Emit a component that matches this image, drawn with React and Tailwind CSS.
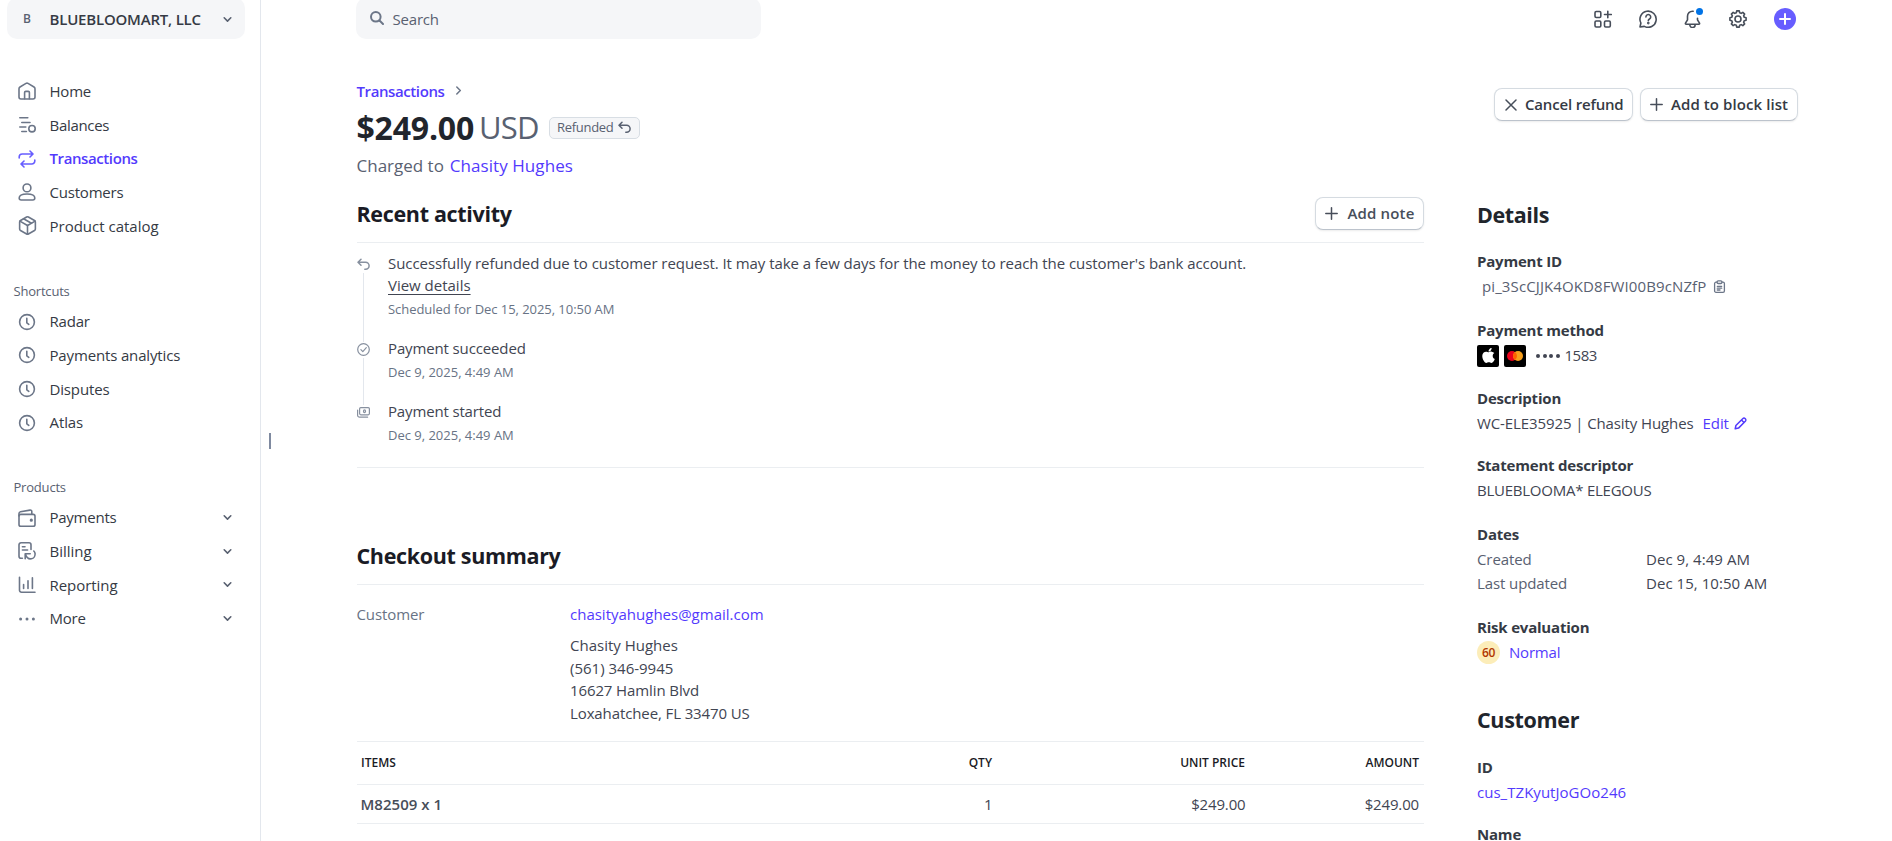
import React, { useState } from "react";
import { Package } from "lucide-react";
import { FaApple } from "react-icons/fa";

// 8 rounded teeth around the center of an 18x18 box
const gearPath = (() => {
    const pts = [];
    for (let i = 0; i < 8; i++) {
        [[-15, 6.5], [-9, 8.2], [9, 8.2], [15, 6.5]].forEach(([offset, r]) => {
            const a = ((i * 45 + offset) * Math.PI) / 180;
            pts.push(`${(9 + r * Math.sin(a)).toFixed(2)} ${(9 - r * Math.cos(a)).toFixed(2)}`);
        });
    }
    return `M${pts.join("L")}Z`;
})();

function Svg({ className = "size-[18px]", box = 18, width = 1.6, children }) {
    return (
        <svg
            className={`shrink-0 ${className}`}
            viewBox={`0 0 ${box} ${box}`}
            fill="none"
            stroke="currentColor"
            strokeWidth={width}
            strokeLinecap="round"
            strokeLinejoin="round"
        >
            {children}
        </svg>
    );
}

const HomeIcon = () => (
    <Svg>
        <path d="M1 6.7a2 2 0 0 1 1-1.7l6-3.6a2 2 0 0 1 2 0L16 5a2 2 0 0 1 1 1.7V15a2 2 0 0 1-2 2H3a2 2 0 0 1-2-2z" />
        <path d="M6.6 16.8v-6.2a1.2 1.2 0 0 1 1.2-1.2h2.4a1.2 1.2 0 0 1 1.2 1.2v6.2" />
    </Svg>
);

const BalancesIcon = () => (
    <Svg>
        <path d="M1.8 1.8h8M3.8 6.5h8.2M1.8 11h6M3.8 15.5h4.6" />
        <circle cx="14" cy="12.7" r="3.2" />
    </Svg>
);

const SwapIcon = () => (
    <Svg>
        <path d="M1.2 8V7a3 3 0 0 1 3-3h10.6M12 1l3 3-3 3" />
        <path d="M16.8 10v1a3 3 0 0 1-3 3H3.2M6 11l-3 3 3 3" />
    </Svg>
);

const PersonIcon = () => (
    <Svg>
        <circle cx="9" cy="4.9" r="3.9" />
        <path d="M1.2 15c0-2.4 3-4 7.8-4s7.8 1.6 7.8 4c0 1.2-.8 2-2 2H3.2c-1.2 0-2-.8-2-2z" />
    </Svg>
);

const BoxIcon = () => <Package className="size-[21px] -mx-[1.5px] shrink-0" strokeWidth={1.8} />;

const ClockIcon = () => (
    <Svg>
        <circle cx="9" cy="9" r="7.4" />
        <path d="M8.8 5.2v4.6l2 1.5" />
    </Svg>
);

const WalletIcon = () => (
    <Svg>
        <rect x="1" y="5.4" width="16" height="11.8" rx="1.8" />
        <path d="M1 7V4.6c0-.9.6-1.6 1.5-1.8L12 1.1c1-.2 1.8.4 1.8 1.4v2.8" />
        <circle cx="13.3" cy="11.2" r="0.8" fill="currentColor" />
    </Svg>
);

const BillingIcon = () => (
    <Svg>
        <path d="M4.4 16.2H3a2 2 0 0 1-2-2V2.8a2 2 0 0 1 2-2h8a2 2 0 0 1 2 2v4.6" />
        <path d="M4.4 4.8H7M4.4 8h5.2" />
        <path d="M7.2 16.8v-5h5M7.4 12c1.2 3.8 3.6 5.3 6 4.8 2.5-.5 4-3 3.6-5.6-.2-1-.7-1.7-1.2-2.2" />
    </Svg>
);

const ChartIcon = () => (
    <Svg>
        <path d="M1.5 1.2v13a2 2 0 0 0 2 2H17M5.6 8.5v4M10 4.8v7.7M14.4 1.8v10.7" />
    </Svg>
);

const DotsIcon = () => (
    <Svg>
        {[2.6, 9, 15.4].map((x) => (
            <circle key={x} cx={x} cy="9" r="1.5" fill="currentColor" stroke="none" />
        ))}
    </Svg>
);

const ChevronDown = () => (
    <Svg className="size-[9px] text-[#596171]" box={9} width={1.6}>
        <path d="M1.2 2.8l3.3 3.3 3.3-3.3" />
    </Svg>
);

const PlusIcon = () => (
    <Svg className="size-[13px] text-[#474e5a]" box={13} width={1.5}>
        <path d="M6.5.8v11.4M.8 6.5h11.4" />
    </Svg>
);

const CloseIcon = () => (
    <Svg className="size-[12px] text-[#474e5a]" box={12} width={1.5}>
        <path d="M1 1l10 10M11 1L1 11" />
    </Svg>
);

const ReturnIcon = () => (
    <Svg className="size-[13px]" box={13} width={1.5}>
        <path d="M4 1.2L1 4.2l3 3M1.2 4.2h7.4a3.5 3.5 0 0 1 0 7H7.8" />
    </Svg>
);

const CheckCircleIcon = () => (
    <Svg className="size-[13px]" box={13} width={1.2}>
        <circle cx="6.5" cy="6.5" r="5.8" />
        <path d="M3.9 6.7l1.9 1.9 3.5-3.9" />
    </Svg>
);

const CashIcon = () => (
    <Svg className="size-[13px]" box={13} width={1.2}>
        <rect x="2.6" y="1.6" width="9.8" height="7.2" rx="1.2" />
        <path d="M.6 4v5.2a2 2 0 0 0 2 2h8" />
        <ellipse cx="7.5" cy="5.2" rx="1" ry="1.4" />
    </Svg>
);

const mainNav = [
    { label: "Home", icon: HomeIcon, tracking: "tracking-[-0.2px]" },
    { label: "Balances", icon: BalancesIcon, tracking: "tracking-[-0.3px]" },
    { label: "Transactions", icon: SwapIcon, tracking: "tracking-[-0.4px]" },
    { label: "Customers", icon: PersonIcon, tracking: "tracking-[-0.2px]" },
    { label: "Product catalog", icon: BoxIcon, tracking: "tracking-[0px]" },
];

const shortcuts = [
    { label: "Radar", icon: ClockIcon, tracking: "tracking-[-0.2px]" },
    { label: "Payments analytics", icon: ClockIcon, tracking: "tracking-[-0.15px]" },
    { label: "Disputes", icon: ClockIcon, tracking: "tracking-[-0.15px]" },
    { label: "Atlas", icon: ClockIcon, tracking: "tracking-[-0.1px]" },
];

const products = [
    { label: "Payments", icon: WalletIcon, tracking: "tracking-[-0.25px]" },
    { label: "Billing", icon: BillingIcon, tracking: "tracking-[0px]" },
    { label: "Reporting", icon: ChartIcon, tracking: "tracking-[-0.05px]" },
    { label: "More", icon: DotsIcon, tracking: "tracking-[-0.2px]" },
];

function NavList({ items, active, setActive, expandable }) {
    return (
        <ul>
            {items.map(({ label, icon: Icon, tracking }) => {
                const isActive = active === label;
                return (
                    <li key={label}>
                        <button
                            onClick={() => setActive(label)}
                            className={`flex h-[33.7px] w-full items-center pl-[18px] pr-[28px] ${
                                isActive ? "font-semibold text-[#533afd]" : "text-[#353a44]"
                            }`}
                        >
                            <span className={`mr-[13.5px] flex ${isActive ? "text-[#675dff]" : "text-[#6c7688]"}`}>
                                <Icon />
                            </span>
                            <span className={tracking}>{label}</span>
                            {expandable && <span className="ml-auto"><ChevronDown /></span>}
                        </button>
                    </li>
                );
            })}
        </ul>
    );
}

function Sidebar() {
    const [active, setActive] = useState("Transactions");
    return (
        <aside className="w-[261px] shrink-0 border-r border-[#e3e7ed]">
            <button className="-mt-0.5 ml-[7px] flex h-[41px] w-[238px] items-center rounded-[10px] bg-[#f5f6f8] pl-4 pr-[13px] pt-px text-left">
                <span className="w-[26.5px] text-[12px] font-semibold text-[#596171]">B</span>
                <span className="font-semibold tracking-[-0.2px] text-[#353a44]">BLUEBLOOMART, LLC</span>
                <span className="ml-auto"><ChevronDown /></span>
            </button>

            <nav className="pt-[35.4px]">
                <NavList items={mainNav} active={active} setActive={setActive} />
                <h3 className="mt-[35px] h-[27px] pl-[13.5px] text-[13px] leading-[27px] tracking-[-0.2px] text-[#596171]">Shortcuts</h3>
                <NavList items={shortcuts} active={active} setActive={setActive} />
                <h3 className="mt-[34.7px] h-[26.5px] pl-[13.5px] text-[13px] leading-[27px] tracking-[-0.2px] text-[#596171]">Products</h3>
                <NavList items={products} active={active} setActive={setActive} expandable />
            </nav>
        </aside>
    );
}

function TopBar() {
    return (
        <header className="-mt-0.5 flex h-[41px] w-[1440px] items-center justify-between">
            <div className="flex h-[41px] w-[405px] items-center rounded-[10px] bg-[#f5f6f8] pl-[14px] text-[#596171]">
                <Svg className="mb-0.5 mr-[8.5px] size-[14px] text-[#6c7688]" box={14} width={2}>
                    <circle cx="5.8" cy="5.8" r="4.8" />
                    <path d="M9.5 9.5L13 13" />
                </Svg>
                <span className="pt-0.5 tracking-[-0.2px]">Search</span>
            </div>

            <div className="flex items-center gap-[27px] text-[#474e5a]">
                <Svg>
                    <rect x="1" y="1.5" width="5.8" height="6" rx="1.2" />
                    <rect x="1" y="11" width="5.8" height="6" rx="1.2" />
                    <rect x="10.5" y="11" width="5.8" height="6" rx="1.2" />
                    <path d="M13.8 1.2v6.6M10.5 4.5h6.8" />
                </Svg>
                <Svg>
                    <path d="M1 17l.9-4A8.1 8.1 0 1 1 5.3 16.4L1 17z" />
                    <path d="M6.9 6.9a2.4 2.4 0 1 1 3.6 2.1c-.9.5-1.2.9-1.2 1.7" />
                    <circle cx="9.3" cy="13.1" r="0.5" fill="currentColor" />
                </Svg>
                <span className="relative flex">
                    <Svg>
                        <path d="M9.2 1.2H8.5a5 5 0 0 0-5 5v3.6L1.5 13.2c-.3.5 0 1 .6 1h12.8c.6 0 .9-.5.6-1l-2-3.4V8.3" />
                        <path d="M5.8 14.8a2.7 2.7 0 0 0 5.4 0" />
                    </Svg>
                    <span className="absolute -top-[2px] left-[11.5px] size-[7px] rounded-full bg-[#0073e6]" />
                </span>
                <Svg>
                    <path d={gearPath} />
                    <circle cx="9" cy="9" r="3" />
                </Svg>
                <button className="flex size-[22px] items-center justify-center rounded-full bg-[#675dff] text-white">
                    <Svg className="size-[12px]" box={12} width={2}>
                        <path d="M6 1v10M1 6h10" />
                    </Svg>
                </button>
            </div>
        </header>
    );
}

function Button({ children, className }) {
    return (
        <button className={`flex h-[33px] items-center rounded-lg border border-[#d5dbe1] border-b-[#bcc3cc] bg-white font-semibold shadow-[0_1px_2px_rgba(0,0,0,0.08)] ${className}`}>
            {children}
        </button>
    );
}

function PageHeader() {
    return (
        <div className="flex h-[141px] w-[1442px] items-start justify-between">
            <div className="pl-[0.5px]">
                <div className="mt-[40px] flex h-6 items-center">
                    <a className="font-semibold tracking-[-0.4px] text-[#533afd]">Transactions</a>
                    <Svg className="mb-0.5 ml-[10px] size-[9px] text-[#6c7688]" box={9} width={1.5}>
                        <path d="M2.8 1l3.5 3.5L2.8 8" />
                    </Svg>
                </div>
                <div className="flex h-[49px] items-center">
                    <span className="text-[32px] font-bold tracking-[-0.2px] text-[#21252c]">$249.00</span>
                    <span className="ml-[5px] w-[62px] text-[31px] tracking-[-0.8px] text-[#596171]">USD</span>
                    <span className="ml-[8px] flex h-[22px] w-[91px] items-center gap-[5px] rounded-[5px] border border-[#d8dee4] bg-[#f5f6f8] pl-[7px] text-[13px] tracking-[-0.3px] text-[#596171]">
                        Refunded
                        <ReturnIcon />
                    </span>
                </div>
                <p className="h-7 text-[17px] leading-7 text-[#596171]">
                    Charged to <a className="ml-[1.5px] tracking-[0.06px] text-[#533afd]">Chasity Hughes</a>
                </p>
            </div>
            <div className="mt-[49px] flex gap-[7px] text-[#353a44]">
                <Button className="w-[139px] pl-[10px]">
                    <CloseIcon />
                    <span className="ml-2 tracking-[-0.18px]">Cancel refund</span>
                </Button>
                <Button className="w-[158px] pl-[9px]">
                    <PlusIcon />
                    <span className="ml-2 tracking-[0.08px]">Add to block list</span>
                </Button>
            </div>
        </div>
    );
}

const activity = [
    { title: "Payment succeeded", tracking: "tracking-[-0.13px]", icon: CheckCircleIcon },
    { title: "Payment started", tracking: "tracking-[-0.15px]", icon: CashIcon },
];

function RecentActivity() {
    return (
        <section>
            <div className="flex h-[63px] items-start justify-between border-b border-[#ebeef1]">
                <h2 className="mt-[18px] text-[21.5px] font-bold leading-[32px] tracking-[-0.33px] text-[#1a1b25]">Recent activity</h2>
                <Button className="mt-[17px] w-[109px] pl-[9px] text-[#474e5a]">
                    <PlusIcon />
                    <span className="ml-[9.5px] tracking-[0.15px]">Add note</span>
                </Button>
            </div>

            <ul className="h-[225px] border-b border-[#ebeef1] pt-[9px] text-[#414552]">
                <li className="flex h-[85px]">
                    <div className="-mb-[5px] mr-[18.5px] flex w-[13px] flex-col items-center pt-[6px] text-[#87909f]">
                        <ReturnIcon />
                        <span className="mt-[2px] w-px flex-1 bg-[#e3e7ed]" />
                    </div>
                    <div>
                        <p className="leading-[22px] tracking-[-0.06px]">
                            Successfully refunded due to customer request. It may take a few days for the money to reach the customer's bank account.
                        </p>
                        <p className="leading-[22px]">
                            <a className="underline underline-offset-[3px] tracking-[-0.01px]">View details</a>
                        </p>
                        <p className="mt-[2px] text-[13px] leading-[22px] tracking-[-0.05px] text-[#687385]">Scheduled for Dec 15, 2025, 10:50 AM</p>
                    </div>
                </li>
                {activity.map(({ title, tracking, icon: Icon }, i) => (
                    <li key={title} className="flex h-[63px]">
                        <div className="-mb-[5px] mr-[18.5px] flex w-[13px] flex-col items-center pt-[6px] text-[#87909f]">
                            <Icon />
                            {i === 0 && <span className="mt-[2px] w-px flex-1 bg-[#e3e7ed]" />}
                        </div>
                        <div>
                            <p className={`leading-[23px] ${tracking}`}>{title}</p>
                            <p className="text-[13px] leading-6 text-[#687385] tracking-[-0.01px]">Dec 9, 2025, 4:49 AM</p>
                        </div>
                    </li>
                ))}
            </ul>
        </section>
    );
}

function CheckoutSummary() {
    return (
        <section className="pt-[72px] text-[#414552]">
            <h2 className="h-[45px] border-b border-[#ebeef1] text-[21.5px] font-bold leading-[32px] tracking-[-0.33px] text-[#1a1b25]">Checkout summary</h2>
            <div className="flex h-[156px] pt-[17px]">
                <span className="w-[213.5px] leading-6 tracking-[-0.1px] text-[#687385]">Customer</span>
                <div>
                    <a className="block leading-6 text-[#533afd]">chasityahughes@gmail.com</a>
                    <div className="mt-2 leading-[22.6px] tracking-[-0.11px]">
                        <p className="tracking-[0px]">Chasity Hughes</p>
                        <p className="tracking-[0px]">(561) 346-9945</p>
                        <p>16627 Hamlin Blvd</p>
                        <p>Loxahatchee, FL 33470 US</p>
                    </div>
                </div>
            </div>
            <div className="grid h-[44px] grid-cols-[460px_171px_253px_174px] items-center border-y border-[#ebeef1] pl-[4.5px] text-right text-[12px] font-semibold text-[#1a1b25]">
                <span className="text-left">ITEMS</span>
                <span>QTY</span>
                <span>UNIT PRICE</span>
                <span>AMOUNT</span>
            </div>
            <div className="grid h-[39px] grid-cols-[460px_172px_253px_173.5px] items-center border-b border-[#ebeef1] pl-[4px] text-right tracking-[-0.15px]">
                <span className="text-left font-semibold tracking-[0.03px] text-[#474e5a]">M82509 x 1</span>
                <span>1</span>
                <span>$249.00</span>
                <span>$249.00</span>
            </div>
        </section>
    );
}

function Field({ label, className = "h-[68px] tracking-[-0.1px]", labelClass = "tracking-[-0.2px]", children }) {
    return (
        <div className={className}>
            <h4 className={`leading-[25px] font-bold text-[#353a44] ${labelClass}`}>{label}</h4>
            {children}
        </div>
    );
}

function DetailsPanel() {
    return (
        <aside className="ml-[53px] w-[321px] pt-[20px] leading-[25px] text-[#414552]">
            <h2 className="text-[21.5px] font-bold leading-[30px] tracking-[-0.4px] text-[#21252c]">Details</h2>

            <div className="mt-[19px]">
                <Field label="Payment ID" className="h-[69px]">
                    <div className="flex items-center pl-[5px] text-[#596171]">
                        <span className="tracking-[0.11px]">pi_3ScCJJK4OKD8FWI00B9cNZfP</span>
                        <Svg className="ml-[7px] size-[13px] text-[#6c7688]" box={13} width={1.3}>
                            <path d="M4 2.2H3A1.4 1.4 0 0 0 1.6 3.6v7.3A1.4 1.4 0 0 0 3 12.3h7a1.4 1.4 0 0 0 1.4-1.4V3.6A1.4 1.4 0 0 0 10 2.2H9" />
                            <rect x="4.1" y="0.8" width="4.8" height="2.7" rx="1" />
                            <path d="M4.3 6.3h4.4M4.3 8.2h4.4M4.3 10h2.7" />
                        </Svg>
                    </div>
                </Field>
                <Field label="Payment method">
                    <div className="flex items-center gap-[5px]">
                        <span className="flex size-[22px] items-center justify-center rounded-[2px] bg-black text-white">
                            <FaApple size={17} />
                        </span>
                        <span className="flex size-[22px] items-center justify-center rounded-[2px] bg-black">
                            <svg className="h-[10px] w-4" viewBox="0 0 16 10">
                                <circle cx="5" cy="5" r="5" fill="#eb001b" />
                                <circle cx="11" cy="5" r="5" fill="#f79e1b" />
                                <path d="M8 1a5 5 0 0 1 0 8 5 5 0 0 1 0-8z" fill="#ff5f00" />
                            </svg>
                        </span>
                        <span className="ml-[5px] flex gap-[2.5px]">
                            {[0, 1, 2, 3].map((i) => (
                                <span key={i} className="size-[4px] rounded-full bg-[#414552]" />
                            ))}
                        </span>
                        <span className="tracking-[-0.5px]">1583</span>
                    </div>
                </Field>
                <Field label="Description" className="h-[67px] tracking-[-0.1px]">
                    <div className="flex items-center">
                        <span>WC-ELE35925 | Chasity Hughes</span>
                        <a className="ml-[9px] text-[#533afd]">Edit</a>
                        <Svg className="ml-[5px] size-[13px] text-[#533afd]" box={13} width={1.5}>
                            <path d="M1.2 11.8l.7-3.3 6.8-6.8a1.8 1.8 0 0 1 2.6 2.6l-6.8 6.8zM7.5 3l2.5 2.5" />
                        </Svg>
                    </div>
                </Field>
                <Field label="Statement descriptor" className="h-[68.500px]">
                    <p className="tracking-[-0.24px]">BLUEBLOOMA* ELEGOUS</p>
                </Field>
                <Field label="Dates" className="mb-[20px]">
                    <dl className="grid grid-cols-[169px_1fr] leading-[24.3px]">
                        <dt className="tracking-[-0.1px] text-[#596171]">Created</dt>
                        <dd className="tracking-[0.05px]">Dec 9, 4:49 AM</dd>
                        <dt className="tracking-[-0.1px] text-[#596171]">Last updated</dt>
                        <dd className="tracking-[0.05px]">Dec 15, 10:50 AM</dd>
                    </dl>
                </Field>
                <Field label="Risk evaluation" className="h-[50px]">
                    <div className="flex items-center gap-[9px]">
                        <span className="flex size-[23px] items-center justify-center rounded-full bg-[#fcedb9] text-[12px] font-semibold tracking-[-0.3px] text-[#b13600]">60</span>
                        <a className="tracking-[-0.2px] text-[#533afd]">Normal</a>
                    </div>
                </Field>
            </div>

            <h2 className="mt-[39.500px] text-[21.5px] font-bold leading-[30px] tracking-[-0.33px] text-[#21252c]">Customer</h2>
            <div className="mt-5">
                <Field label="ID" className="h-[67px]">
                    <a className="tracking-[0.03px] text-[#533afd]">cus_TZKyutJoGOo246</a>
                </Field>
                <Field label="Name" />
            </div>
        </aside>
    );
}

export default function App() {
    return (
        <div className="flex h-[841px] overflow-hidden bg-white font-['Open_Sans','Noto_Sans',sans-serif] text-[15px]">
            <Sidebar />
            <div className="flex w-[95px] shrink-0 items-center pl-2 pt-[41px]">
                <span className="h-4 w-[2px] bg-[#7f8aa0]" />
            </div>
            <main className="flex-1">
                <TopBar />
                <PageHeader />
                <div className="flex">
                    <div className="w-[1068px] shrink-0 pl-[0.5px]">
                        <RecentActivity />
                        <CheckoutSummary />
                    </div>
                    <DetailsPanel />
                </div>
            </main>
        </div>
    );
}
